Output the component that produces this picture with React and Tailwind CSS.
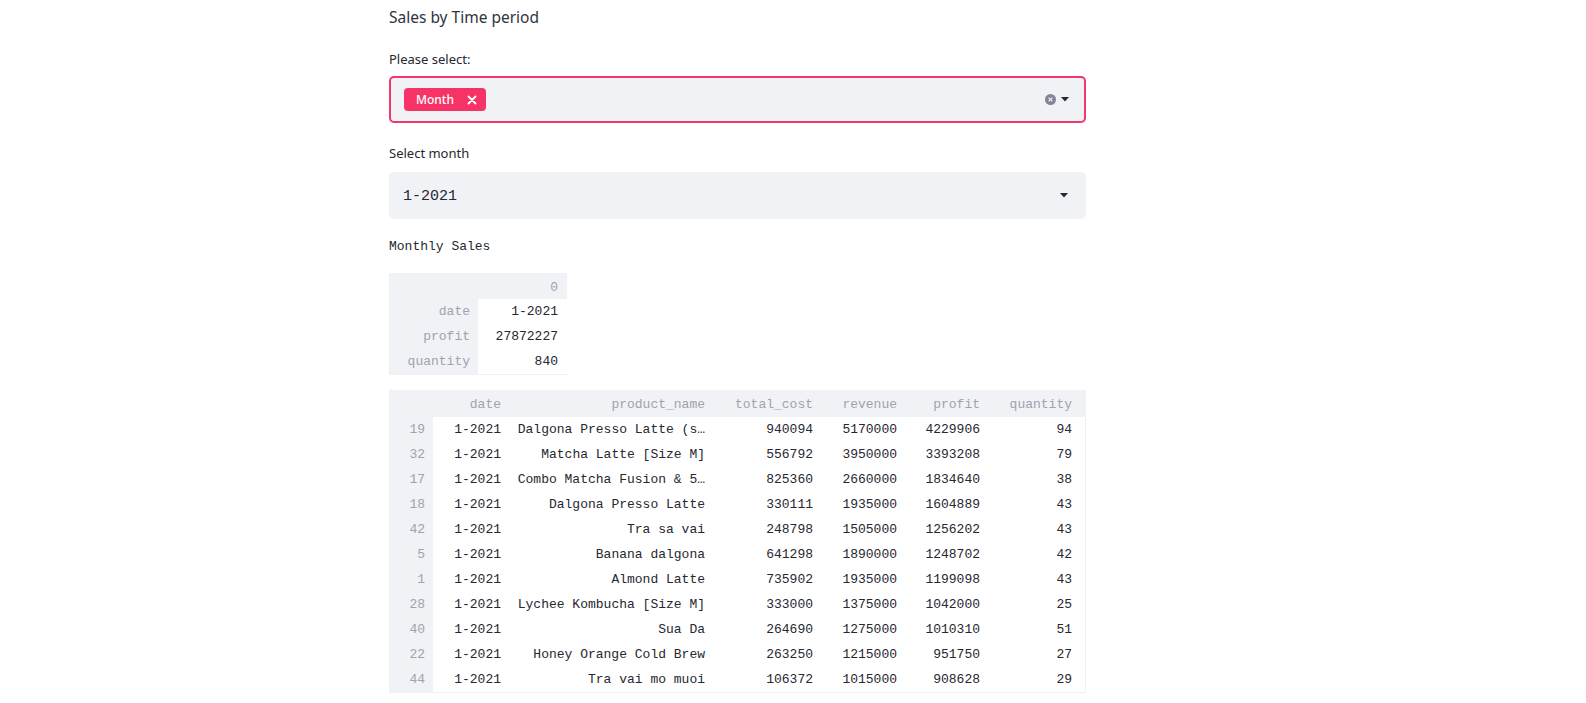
import React from "react";

const rows = [
	["19", "1-2021", "Dalgona Presso Latte (s…", "940094", "5170000", "4229906", "94"],
	["32", "1-2021", "Matcha Latte [Size M]", "556792", "3950000", "3393208", "79"],
	["17", "1-2021", "Combo Matcha Fusion & 5…", "825360", "2660000", "1834640", "38"],
	["18", "1-2021", "Dalgona Presso Latte", "330111", "1935000", "1604889", "43"],
	["42", "1-2021", "Tra sa vai", "248798", "1505000", "1256202", "43"],
	["5", "1-2021", "Banana dalgona", "641298", "1890000", "1248702", "42"],
	["1", "1-2021", "Almond Latte", "735902", "1935000", "1199098", "43"],
	["28", "1-2021", "Lychee Kombucha [Size M]", "333000", "1375000", "1042000", "25"],
	["40", "1-2021", "Sua Da", "264690", "1275000", "1010310", "51"],
	["22", "1-2021", "Honey Orange Cold Brew", "263250", "1215000", "951750", "27"],
	["44", "1-2021", "Tra vai mo muoi", "106372", "1015000", "908628", "29"],
];

const headers = ["date", "product_name", "total_cost", "revenue", "profit", "quantity"];

const Caret = () => (
	<svg width="8" height="5" viewBox="0 0 8 5">
		<path d="M0 0 L8 0 L4 4.5 Z" fill="#262730" />
	</svg>
);

const App = () => {
	return (
		<div className="min-h-screen bg-white text-[#262730] font-['Noto_Sans',sans-serif]">
			<div className="ml-[389px] w-[697px] pt-[5px]">
				<div className="text-[15.5px] leading-6 text-[#31333f]">Sales by Time period</div>

				{/* multiselect */}
				<div className="mt-5 text-[13px] leading-5">Please select:</div>
				<div className="mt-[7px] h-[47px] rounded-[5px] border-2 border-[#f0386b] bg-[#f0f2f6] flex items-center pl-[13px] pr-[15px]">
					<div className="h-[23px] w-[82px] rounded-[4px] bg-[#f63366] text-white flex items-center pl-[12px] pr-[9px]">
						<span className="text-[12px] font-medium leading-none">Month</span>
						<svg className="ml-auto" width="10" height="10" viewBox="0 0 10 10">
							<path d="M1.5 1.5 L8.5 8.5 M8.5 1.5 L1.5 8.5" stroke="white" strokeWidth="1.8" strokeLinecap="round" />
						</svg>
					</div>
					<div className="ml-auto flex items-center gap-[5px]">
						<svg width="11" height="11" viewBox="0 0 11 11">
							<circle cx="5.5" cy="5.5" r="5.5" fill="#808495" />
							<path d="M3.6 3.6 L7.4 7.4 M7.4 3.6 L3.6 7.4" stroke="#f0f2f6" strokeWidth="1.3" />
						</svg>
						<Caret />
					</div>
				</div>

				{/* selectbox */}
				<div className="mt-5 text-[13px] leading-5">Select month</div>
				<div className="mt-[9px] h-[47px] rounded-[5px] bg-[#f0f2f6] flex items-center pl-[14px] pr-[18px]">
					<span className="pt-[3px] font-['Liberation_Mono',monospace] text-[15px]">1-2021</span>
					<div className="ml-auto">
						<Caret />
					</div>
				</div>

				<div className="mt-[18px] font-['Liberation_Mono',monospace] text-[13px] leading-5">Monthly Sales</div>

				{/* small table */}
				<div className="mt-[16px] w-[178px] font-['Liberation_Mono',monospace] text-[13px] border-b border-[#eef0f3]">
					<div className="grid grid-cols-[89px_89px] h-[26px] items-center pt-[3px] bg-[#f0f2f6] text-[#9ea3ad]">
						<div />
						<div className="text-right pr-[9px]">0</div>
					</div>
					{[
						["date", "1-2021"],
						["profit", "27872227"],
						["quantity", "840"],
					].map(([k, v]) => (
						<div key={k} className="grid grid-cols-[89px_89px] h-[25px] items-center">
							<div className="h-full flex items-center justify-end pr-2 bg-[#f0f2f6] text-[#9ea3ad]">{k}</div>
							<div className="text-right pr-[9px]">{v}</div>
						</div>
					))}
				</div>

				{/* main table */}
				<div className="mt-[15px] font-['Liberation_Mono',monospace] text-[13px] border-b border-r border-[#eef0f3]">
					<div className="grid grid-cols-[44px_76px_204px_108px_84px_83px_98px] h-[27px] items-center pt-[2px] bg-[#f0f2f6] text-[#9ea3ad]">
						<div />
						{headers.map((h, i) => (
							<div key={h} className={`text-right ${i === headers.length - 1 ? "pr-[14px]" : "pr-2"}`}>
								{h}
							</div>
						))}
					</div>
					{rows.map((r) => (
						<div key={r[0]} className="grid grid-cols-[44px_76px_204px_108px_84px_83px_98px] h-[25px] items-center">
							<div className="h-full flex items-center justify-end pr-2 bg-[#f0f2f6] text-[#9ea3ad]">{r[0]}</div>
							{r.slice(1).map((c, i) => (
								<div key={i} className={`text-right whitespace-nowrap ${i === 5 ? "pr-[14px]" : "pr-2"}`}>
									{c}
								</div>
							))}
						</div>
					))}
				</div>
			</div>
		</div>
	);
};

export default App;
